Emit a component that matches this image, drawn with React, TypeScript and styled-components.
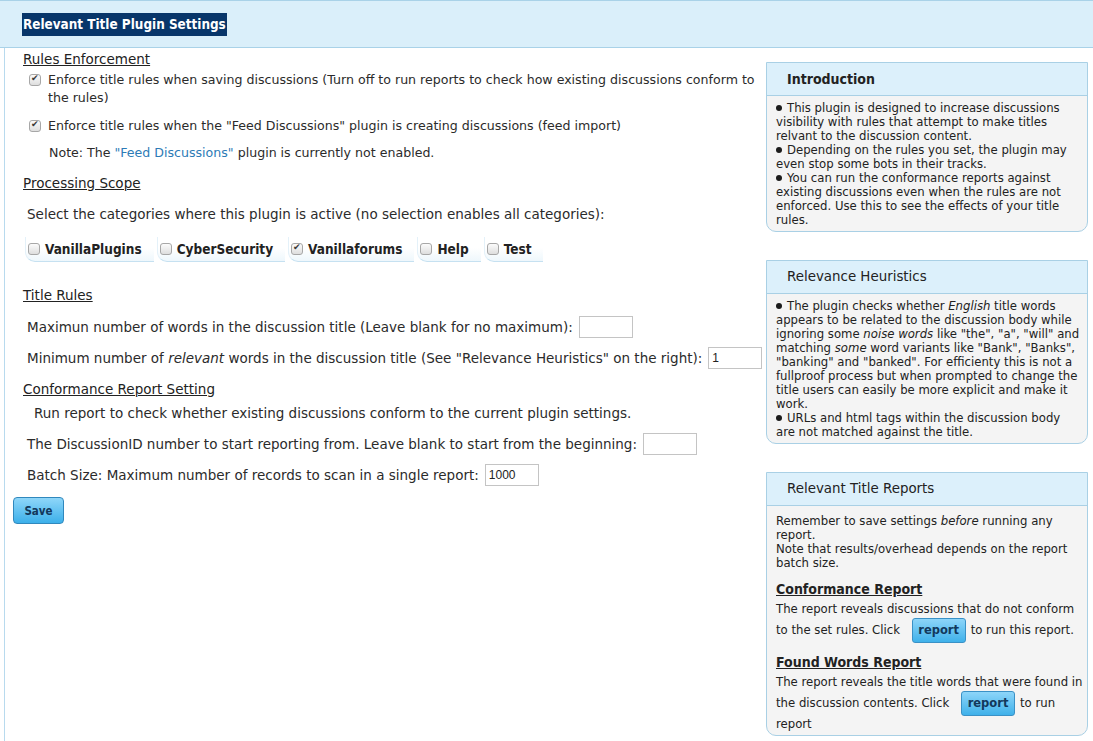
import styled, { createGlobalStyle } from 'styled-components';

const GlobalStyle = createGlobalStyle`
  html, body {
    margin: 0;
    padding: 0;
    background: #fff;
  }
  body {
    font-family: "DejaVu Sans", sans-serif;
    font-size: 13.5px;
    color: #2b2b2b;
  }
`;

const categories = [
  { name: 'VanillaPlugins', checked: false },
  { name: 'CyberSecurity', checked: false },
  { name: 'Vanillaforums', checked: true },
  { name: 'Help', checked: false },
  { name: 'Test', checked: false },
];

export default function App() {
  return (
    <>
      <GlobalStyle />
      <Page>
        <Header>
          <HeaderTitle>Relevant Title Plugin Settings</HeaderTitle>
        </Header>
        <Body>
          <Main>
            <SectionTitle $top={2}>Rules Enforcement</SectionTitle>
            <CheckRow $top={3}>
              <Check type="checkbox" defaultChecked />
              <span>
                Enforce title rules when saving discussions (Turn off to run
                reports to check how existing discussions conform to the rules)
              </span>
            </CheckRow>
            <CheckRow $top={10}>
              <Check type="checkbox" defaultChecked />
              <span>
                Enforce title rules when the "Feed Discussions" plugin is
                creating discussions (feed import)
              </span>
            </CheckRow>
            <Note>
              Note: The <NoteLink>"Feed Discussions"</NoteLink> plugin is
              currently not enabled.
            </Note>
            <SectionTitle $top={12}>Processing Scope</SectionTitle>
            <Text $top={13} $left={22}>
              Select the categories where this plugin is active (no selection
              enables all categories):
            </Text>
            <Categories>
              {categories.map((cat) => {
                return (
                  <CategoryLabel key={cat.name}>
                    <Check type="checkbox" defaultChecked={cat.checked} />
                    {cat.name}
                  </CategoryLabel>
                );
              })}
            </Categories>
            <SectionTitle $top={24}>Title Rules</SectionTitle>
            <FieldRow $top={7}>
              Maximun number of words in the discussion title (Leave blank for
              no maximum):
              <Field type="text" defaultValue="" />
            </FieldRow>
            <FieldRow $top={0}>
              <span>
                Minimum number of <em>relevant</em> words in the discussion
                title (See "Relevance Heuristics" on the right):
              </span>
              <Field type="text" defaultValue="1" />
            </FieldRow>
            <SectionTitle $top={7}>Conformance Report Setting</SectionTitle>
            <Text $top={6} $left={29}>
              Run report to check whether existing discussions conform to the
              current plugin settings.
            </Text>
            <FieldRow $top={6}>
              The DiscussionID number to start reporting from. Leave blank to
              start from the beginning:
              <Field type="text" defaultValue="" />
            </FieldRow>
            <FieldRow $top={0}>
              Batch Size: Maximum number of records to scan in a single report:
              <Field type="text" defaultValue="1000" />
            </FieldRow>
            <SaveButton>Save</SaveButton>
          </Main>
          <Sidebar>
            <Card>
              <CardHeader $bold>Introduction</CardHeader>
              <CardBody>
                <Bullet />
                This plugin is designed to increase discussions visibility with
                rules that attempt to make titles relvant to the discussion
                content.
                <br />
                <Bullet />
                Depending on the rules you set, the plugin may even stop some
                bots in their tracks.
                <br />
                <Bullet />
                You can run the conformance reports against existing
                discussions even when the rules are not enforced. Use this to
                see the effects of your title rules.
              </CardBody>
            </Card>
            <Card>
              <CardHeader>Relevance Heuristics</CardHeader>
              <CardBody>
                <Bullet />
                The plugin checks whether <em>English</em> title words appears
                to be related to the discussion body while ignoring some{' '}
                <em>noise words</em> like "the", "a", "will" and matching{' '}
                <em>some</em> word variants like "Bank", "Banks", "banking" and
                "banked". For efficienty this is not a fullproof process but
                when prompted to change the title users can easily be more
                explicit and make it work.
                <br />
                <Bullet />
                URLs and html tags within the discussion body are not matched
                against the title.
              </CardBody>
            </Card>
            <Card>
              <CardHeader>Relevant Title Reports</CardHeader>
              <CardBody $top={8} $right={3} $bottom={0}>
                Remember to save settings <em>before</em> running any report.
                <br />
                Note that results/overhead depends on the report batch size.
                <ReportTitle $top={9}>Conformance Report</ReportTitle>
                <ReportText>
                  The report reveals discussions that do not conform to the set
                  rules. Click <ReportButton>report</ReportButton>to run this
                  report.
                </ReportText>
                <ReportTitle $top={11}>Found Words Report</ReportTitle>
                <ReportText>
                  The report reveals the title words that were found in the
                  discussion contents. Click <ReportButton>report</ReportButton>
                  to run report
                </ReportText>
              </CardBody>
            </Card>
          </Sidebar>
        </Body>
      </Page>
    </>
  );
}

const Page = styled.div`
  width: 1093px;
  min-height: 741px;
  display: flex;
  flex-direction: column;
`;

const Header = styled.div`
  height: 46px;
  display: flex;
  align-items: center;
  padding-left: 22px;
  background: #daeffa;
  border-top: 1px solid #a9d2e8;
  border-bottom: 1px solid #a9d2e8;
`;

const HeaderTitle = styled.span`
  display: inline-block;
  height: 23px;
  line-height: 23px;
  padding: 0 1px;
  background: #08366a;
  color: #fff;
  font-family: "DejaVu Sans Condensed", "Liberation Sans", sans-serif;
  font-weight: bold;
  font-size: 13.4px;
`;

const Body = styled.div`
  flex: 1;
  display: flex;
`;

const Main = styled.div`
  flex: 1;
  margin-left: 4px;
  border-left: 1px solid #b8daee;
  padding-bottom: 20px;
`;

const SectionTitle = styled.div<{ $top: number }>`
  margin: ${({ $top }) => $top}px 0 0 18px;
  line-height: 18px;
  font-size: 13.5px;
  color: #222;
  text-decoration: underline;
`;

const CheckRow = styled.label<{ $top: number }>`
  display: flex;
  align-items: flex-start;
  gap: 7px;
  margin: ${({ $top }) => $top}px 0 0 24px;
  line-height: 18px;
  font-size: 12.6px;
`;

const Check = styled.input`
  appearance: none;
  flex: none;
  position: relative;
  width: 12px;
  height: 12px;
  margin: 3px 0 0;
  border: 1px solid #a7a7a7;
  border-radius: 3px;
  background: linear-gradient(#fbfbfb, #dedede);

  &:checked::after {
    content: '✔';
    position: absolute;
    left: 1px;
    top: -2px;
    font-size: 9px;
    color: #3a3a3a;
  }
`;

const Note = styled.div`
  margin: 9px 0 0 44px;
  line-height: 18px;
  font-size: 12.6px;
`;

const NoteLink = styled.span`
  color: #2d7bb6;
`;

const Text = styled.div<{ $top: number; $left: number }>`
  margin: ${({ $top }) => $top}px 0 0 ${({ $left }) => $left}px;
  line-height: 18px;
`;

const Categories = styled.div`
  display: flex;
  gap: 3px;
  margin: 14px 0 0 20px;
`;

const CategoryLabel = styled.label`
  display: flex;
  align-items: center;
  gap: 5px;
  height: 24px;
  padding: 0 12px 0 2px;
  border-bottom: 1px solid #c6e1f1;
  border-left: 1px solid #e4f1f9;
  border-bottom-left-radius: 10px;
  background: linear-gradient(#ffffff 45%, #eef7fc);
  font-family: "DejaVu Sans Condensed", "Liberation Sans", sans-serif;
  font-weight: bold;
  font-size: 13.5px;
  color: #222;

  & input {
    margin: 0;
  }
`;

const FieldRow = styled.div<{ $top: number }>`
  display: flex;
  align-items: center;
  gap: 6px;
  height: 31px;
  margin: ${({ $top }) => $top}px 0 0 22px;
  white-space: nowrap;
`;

const Field = styled.input`
  width: 54px;
  height: 22px;
  box-sizing: border-box;
  padding: 0 3px;
  border: 1px solid #c4c4c4;
  font-family: "Liberation Sans", sans-serif;
  font-size: 12px;
  color: #222;
`;

const SaveButton = styled.button`
  display: block;
  width: 51px;
  height: 27px;
  margin: 7px 0 0 8px;
  border: 1px solid #3088bd;
  border-radius: 4px;
  background: linear-gradient(#8fd6f9, #3cb0ea);
  color: #12385c;
  font-family: "DejaVu Sans Condensed", "Liberation Sans", sans-serif;
  font-weight: bold;
  font-size: 11.5px;
`;

const Sidebar = styled.div`
  width: 322px;
  margin: 14px 5px 0 0;
  display: flex;
  flex-direction: column;
  gap: 28px;
`;

const Card = styled.div`
  border: 1px solid #a9d0e5;
  border-radius: 0 0 10px 10px;
  background: #f4f4f4;
  overflow: hidden;
`;

const CardHeader = styled.div<{ $bold?: boolean }>`
  height: 32px;
  line-height: 32px;
  padding-left: 20px;
  background: #dcf0fb;
  border-bottom: 1px solid #a9d0e5;
  font-family: ${({ $bold }) =>
    $bold
      ? '"DejaVu Sans Condensed", "DejaVu Sans", sans-serif'
      : '"DejaVu Sans", sans-serif'};
  font-size: ${({ $bold }) => ($bold ? '14px' : '13.4px')};
  font-weight: ${({ $bold }) => ($bold ? 'bold' : 'normal')};
  color: #222;
`;

const CardBody = styled.div<{ $top?: number; $right?: number; $bottom?: number }>`
  padding: ${({ $top }) => $top ?? 5}px ${({ $right }) => $right ?? 6}px
    ${({ $bottom }) => $bottom ?? 4}px 9px;
  font-size: 11.7px;
  line-height: 14px;
  color: #222;
`;

const Bullet = styled.span`
  display: inline-block;
  width: 6px;
  height: 6px;
  margin: 0 5px 1px 0;
  border-radius: 50%;
  background: #1c1c1c;
`;

const ReportTitle = styled.div<{ $top: number }>`
  margin-top: ${({ $top }) => $top}px;
  font-family: "DejaVu Sans Condensed", "DejaVu Sans", sans-serif;
  font-size: 14px;
  font-weight: bold;
  line-height: 20px;
  text-decoration: underline;
`;

const ReportText = styled.div`
  line-height: 21px;
`;

const ReportButton = styled.span`
  display: inline-block;
  width: 52px;
  height: 23px;
  line-height: 23px;
  margin: -3px 5px -3px 8px;
  vertical-align: middle;
  text-align: center;
  border: 1px solid #3a91c6;
  border-radius: 3px;
  background: linear-gradient(#8dd5f9, #3fb1ea);
  color: #12385c;
  font-weight: bold;
  font-size: 11.5px;
`;
